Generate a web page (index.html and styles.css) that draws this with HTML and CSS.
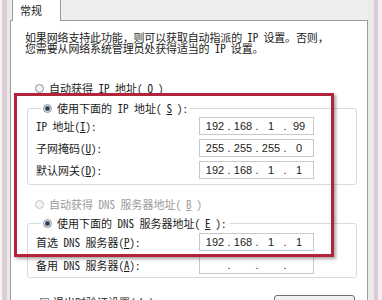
FILE: index.html
```html
<!DOCTYPE html>
<html lang="zh-CN">

<head>
    <meta charset="UTF-8" />
    <title>Internet 协议版本 4 (TCP/IPv4) 属性</title>
    <link rel="stylesheet" href="styles.css">
</head>

<body>
    <div class="window">
        <div class="edge-left"></div>

        <div class="sheet">
            <div class="tabs">
                <div class="tab">常规</div>
            </div>

            <div class="panel">
                <p class="intro">如果网络支持此功能，则可以获取自动指派的 IP 设置。否则，<br>您需要从网络系统管理员处获得适当的 IP 设置。</p>

                <div class="option first"><span class="radio"></span>自动获得 IP 地址(<u>O</u>)</div>

                <fieldset class="group ip-group">
                    <legend class="option"><span class="radio checked"></span>使用下面的 IP 地址(<u>S</u>):</legend>
                    <div class="field">
                        <span class="field-label">IP 地址(<u>I</u>):</span>
                        <div class="ip-box">
                            <span class="seg">192</span><span class="dot">.</span><span class="seg">168</span><span class="dot">.</span><span class="seg">1</span><span class="dot">.</span><span class="seg">99</span>
                        </div>
                    </div>
                    <div class="field">
                        <span class="field-label">子网掩码(<u>U</u>):</span>
                        <div class="ip-box">
                            <span class="seg">255</span><span class="dot">.</span><span class="seg">255</span><span class="dot">.</span><span class="seg">255</span><span class="dot">.</span><span class="seg">0</span>
                        </div>
                    </div>
                    <div class="field">
                        <span class="field-label">默认网关(<u>D</u>):</span>
                        <div class="ip-box">
                            <span class="seg">192</span><span class="dot">.</span><span class="seg">168</span><span class="dot">.</span><span class="seg">1</span><span class="dot">.</span><span class="seg">1</span>
                        </div>
                    </div>
                </fieldset>

                <div class="option dns-auto disabled"><span class="radio"></span>自动获得 DNS 服务器地址(<u>B</u>)</div>

                <fieldset class="group dns-group">
                    <legend class="option"><span class="radio checked"></span>使用下面的 DNS 服务器地址(<u>E</u>):</legend>
                    <div class="field tall">
                        <span class="field-label">首选 DNS 服务器(<u>P</u>):</span>
                        <div class="ip-box">
                            <span class="seg">192</span><span class="dot">.</span><span class="seg">168</span><span class="dot">.</span><span class="seg">1</span><span class="dot">.</span><span class="seg">1</span>
                        </div>
                    </div>
                    <div class="field tall">
                        <span class="field-label">备用 DNS 服务器(<u>A</u>):</span>
                        <div class="ip-box">
                            <span class="seg"></span><span class="dot">.</span><span class="seg"></span><span class="dot">.</span><span class="seg"></span><span class="dot">.</span><span class="seg"></span>
                        </div>
                    </div>
                </fieldset>

                <div class="footer">
                    <div class="check-row"><span class="checkbox"></span>退出时验证设置(<u>L</u>)</div>
                    <button class="advanced">高级(<u>V</u>)...</button>
                </div>
            </div>
        </div>

        <div class="edge-right"></div>

        <!-- red marker drawn over the dialog -->
        <div class="highlight"></div>
    </div>
</body>

</html>
```

FILE: styles.css
```css
* {
    box-sizing: border-box;
}

body {
    margin: 0;
    width: 382px;
    height: 300px;
    overflow: hidden;
    background-color: #f0eeee;
    font-family: "Noto Sans Mono CJK SC", "Noto Sans CJK SC", sans-serif;
    font-size: 11px;
    color: #1b1b1b;
}

u {
    text-decoration: underline;
    text-underline-offset: 1px;
}

.window {
    position: relative;
    display: flex;
    height: 300px;
}

.edge-left {
    width: 10px;
    background: linear-gradient(to right, #f6f4f5 0 2px, #d9cfd5 2px 7px, #ece8ea 7px);
}

.edge-right {
    width: 14px;
    background: linear-gradient(to right, #ecebeb 0 6px, #dccbd7 6px 10px, #f3f0f2 10px);
}

.sheet {
    width: 358px;
    display: flex;
    flex-direction: column;
}

.tabs {
    height: 20px;
    padding-left: 2px;
    background-color: #efeded;
    position: relative;
    z-index: 1;
}

.tab {
    width: 49px;
    height: 21px;
    padding-left: 7px;
    line-height: 21px;
    background-color: #fff;
    border: 1px solid #9a9a9a;
    border-top: none;
    border-bottom: none;
}

.panel {
    flex: 1;
    background-color: #fff;
    border: 1px solid #9c9c9c;
    padding: 11px 10px 0 16px;
}

.intro {
    margin: 0 0 0 -2px;
    line-height: 11px;
    white-space: nowrap;
    letter-spacing: -0.15px;
}

.option {
    display: flex;
    align-items: center;
    gap: 5px;
    height: 14px;
    white-space: nowrap;
}

.option.first {
    margin: 27px 0 0 8px;
}

.option.disabled {
    color: #9a9a9a;
}

.radio {
    flex: none;
    width: 9px;
    height: 9px;
    border-radius: 50%;
    border: 1px solid #8d9094;
    background: radial-gradient(circle at 50% 40%, #ffffff, #e2e4e7);
}

.radio.checked {
    background: radial-gradient(circle, #263a52 0 1.6px, #7d91a8 2.4px, #eef1f4 3.2px);
}

.disabled .radio {
    border-color: #c3c3c3;
    background: #f3f3f3;
}

.group {
    margin: 6px 0 0 0;
    padding: 0 0 3px 8px;
    border: 1px solid #d5dadf;
    border-radius: 3px;
    min-width: 0;
}

.group legend {
    padding: 0 2px;
    margin-left: 5px;
}

.dns-auto {
    margin: 12px 0 0 8px;
}

.dns-group {
    margin-top: 5px;
    padding-bottom: 1px;
}

.field {
    display: flex;
    align-items: center;
    height: 22px;
}

.field.tall {
    height: 23px;
}

.field-label {
    width: 163px;
    white-space: nowrap;
}

.ip-box {
    width: 115px;
    height: 18px;
    display: flex;
    align-items: center;
    padding-left: 3px;
    border: 1px solid #c4c9ce;
    background-color: #fff;
    font-family: "Liberation Sans", sans-serif;
    font-size: 11px;
    color: #222;
}

.seg {
    width: 24px;
    text-align: center;
}

.dot {
    width: 4px;
    text-align: center;
}

.footer {
    display: flex;
    justify-content: space-between;
    align-items: flex-start;
    margin-top: 17px;
}

.check-row {
    display: flex;
    align-items: center;
    gap: 4px;
    margin-left: 13px;
    height: 14px;
}

.checkbox {
    width: 9px;
    height: 9px;
    border: 1px solid #8f8f8f;
    background: linear-gradient(#e6e6e6, #fdfdfd);
}

.advanced {
    width: 81px;
    height: 23px;
    margin-right: 2px;
    padding: 0;
    font-family: inherit;
    font-size: 11px;
    color: #1b1b1b;
    border: 1px solid #707070;
    border-radius: 3px;
    background: linear-gradient(#f4f4f4, #dedede);
}

.highlight {
    position: absolute;
    left: 14px;
    top: 93px;
    width: 320px;
    height: 164px;
    border: 3px solid #b3243b;
    box-shadow: 2px 2px 3px rgba(70, 50, 50, 0.45);
    pointer-events: none;
}
```
